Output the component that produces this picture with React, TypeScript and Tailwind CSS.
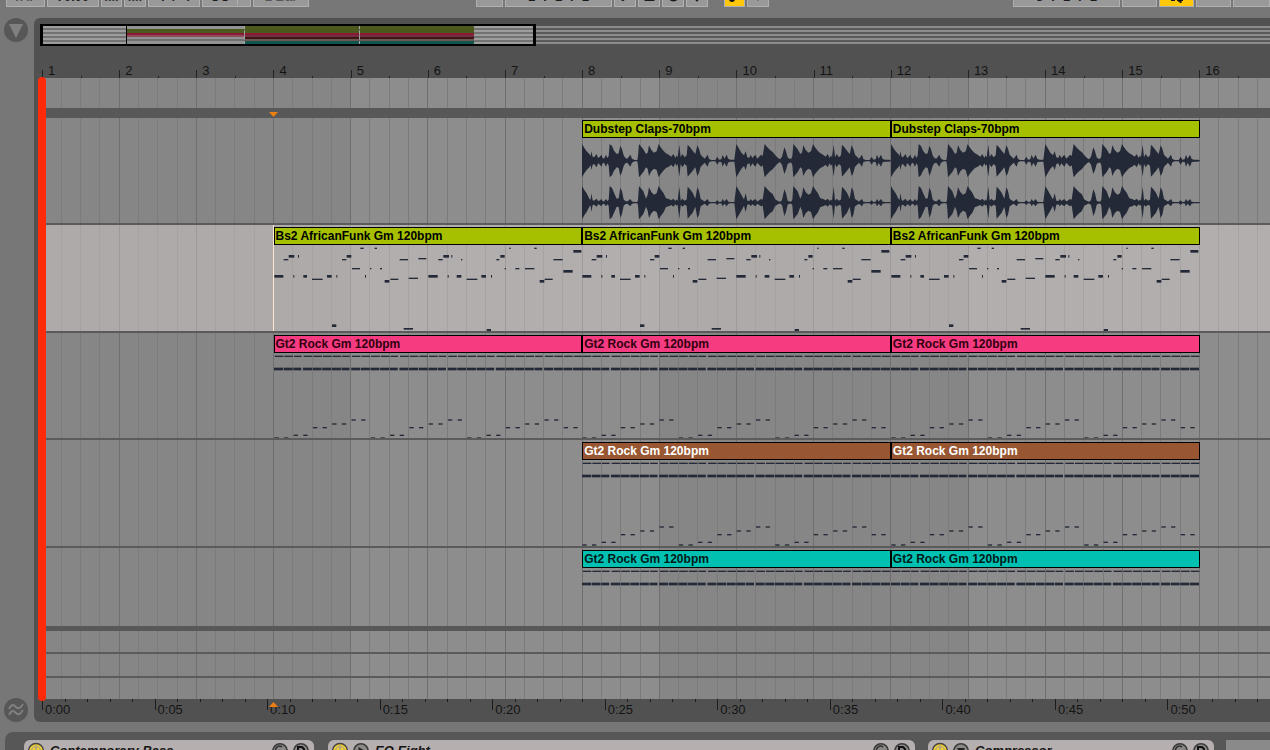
import type { ReactNode } from "react";
import { Play, Plus, Circle, Square } from "lucide-react";

const TOTAL_BARS = 15.913;
const TOTAL_SECONDS = 54.55;

const barPct = (bars: number) => `${(bars / TOTAL_BARS) * 100}%`;
const secPct = (secs: number) => `${(secs / TOTAL_SECONDS) * 100}%`;

type Note = [x: number, y: number, w: number, h: number];
type ClipKind = "audio" | "bass" | "rock";

type Track = {
    name: string;
    kind: ClipKind;
    start: number;
    count: number;
    header: string;
    lane: string;
    selected?: boolean;
};

const TRACKS: Track[] = [
    { name: "Dubstep Claps-70bpm", kind: "audio", start: 7, count: 2, header: "bg-[#a6c000] text-black", lane: "h-[107px] border-b-2" },
    { name: "Bs2 AfricanFunk Gm 120bpm", kind: "bass", start: 3, count: 3, header: "bg-[#a6c000] text-black", lane: "h-[108px] border-b-2", selected: true },
    { name: "Gt2 Rock Gm 120bpm", kind: "rock", start: 3, count: 3, header: "bg-[#f63b80] text-[#30000f]", lane: "h-[107px] border-b-2" },
    { name: "Gt2 Rock Gm 120bpm", kind: "rock", start: 7, count: 2, header: "bg-[#985732] text-white", lane: "h-[108px] border-b-2" },
    { name: "Gt2 Rock Gm 120bpm", kind: "rock", start: 7, count: 2, header: "bg-[#00c0b2] text-[#001a18]", lane: "h-[78px]" },
];

// note and waveform data share a 926 x 258 space per clip
const BASS_NOTES: Note[] = [
    [1, 90, 27, 8], [58, 90, 3, 8], [88, 90, 11, 8], [159, 90, 14, 8], [187, 90, 3, 8], [273, 90, 3, 8],
    [463, 90, 28, 8], [521, 90, 3, 8], [548, 90, 14, 8], [622, 90, 14, 8], [651, 90, 3, 8],
    [114, 101, 32, 4], [349, 101, 24, 4], [578, 101, 32, 4], [812, 101, 24, 4],
    [29, 42, 14, 4], [204, 42, 13, 4], [377, 42, 25, 4], [493, 42, 13, 4], [561, 42, 4, 4], [667, 42, 9, 4], [838, 42, 28, 4],
    [44, 30, 17, 8], [72, 30, 3, 8], [218, 30, 14, 8], [508, 30, 17, 8], [532, 30, 3, 8], [679, 30, 13, 8],
    [259, 8, 10, 4], [302, 8, 7, 4], [706, 8, 4, 4], [781, 8, 7, 4],
    [234, 69, 24, 4], [288, 69, 4, 4], [318, 69, 6, 4], [692, 69, 4, 4], [724, 69, 12, 4], [753, 69, 28, 4],
    [332, 105, 14, 8], [797, 105, 14, 8],
    [433, 39, 24, 4], [404, 98, 28, 4], [868, 75, 28, 8], [898, 15, 24, 8],
    [174, 238, 13, 8], [389, 249, 28, 5], [638, 252, 13, 6],
];

const STEP = 926 / 32;
const RIFF = [253, 253, 245, 245, 222, 222, 211, 211, 199, 199];

const ROCK_NOTES: Note[] = Array.from({ length: 32 }, (_, i) => i).flatMap((i): Note[] => {
    const x = i * STEP;
    const w = i % 5 === 2 ? 24 : 27;
    return [
        [x + 2, 8, w - 1, 4],
        [x, 44, w, 8],
        [x + 1, i >= 30 ? 222 : RIFF[i % 10], 13, 4],
    ];
});

const HITS_A = [
    [0, 50], [7, 38], [14, 28], [22, 20], [26, 14], [28, 28], [32, 12], [36, 10], [44, 20], [48, 8], [52, 10], [58, 18],
    [62, 8], [66, 6], [72, 18], [76, 8], [80, 14], [83, 50], [90, 44], [96, 30], [104, 20], [110, 22], [115, 45],
    [120, 34], [125, 16], [130, 8], [136, 6], [145, 18], [150, 6], [158, 2], [166, 2],
];
const HITS_B = [
    [463, 50], [470, 38], [478, 24], [486, 16], [491, 28], [496, 10], [502, 8], [506, 18], [511, 8], [520, 18], [526, 6],
    [537, 18], [542, 14], [548, 50], [556, 40], [564, 32], [572, 26], [580, 16], [588, 8], [594, 4], [600, 12],
    [607, 40], [612, 28], [617, 10], [622, 6], [628, 6],
];
const FILL = [
    [168, 14], [171, 50], [176, 44], [184, 34], [192, 20], [197, 24], [201, 46], [208, 32], [216, 24], [224, 28], [230, 50],
    [236, 40], [244, 30], [252, 22], [260, 18], [268, 12], [274, 20], [280, 8], [284, 16], [287, 10], [292, 48],
    [296, 10], [301, 20], [308, 10], [314, 16], [317, 48], [324, 40], [332, 30], [340, 20], [346, 46], [351, 36],
    [356, 18], [362, 12], [368, 6], [377, 18], [381, 5], [388, 2], [400, 2], [406, 12], [411, 3], [418, 4],
    [422, 18], [427, 6], [434, 18], [439, 5], [446, 3], [457, 3],
];
const ENVELOPE = [...HITS_A, ...FILL, ...HITS_B, ...FILL.map(([x, a]) => [x + 463, a])];

function wavePath(cy: number, quiet: number) {
    const amp = (a: number) => (a <= 22 ? Math.max(2, a * quiet) : a);
    const top = ENVELOPE.map(([x, a]) => `${x} ${cy - amp(a)}`);
    const bottom = ENVELOPE.map(([x, a]) => `${x} ${cy + amp(a)}`).reverse();
    return `M${top.join("L")}L926 ${cy - 2}L926 ${cy + 2}L${bottom.join("L")}Z`;
}

function ClipContent({ kind }: { kind: ClipKind }) {
    const notes = kind === "bass" ? BASS_NOTES : ROCK_NOTES;
    return (
        <svg viewBox="0 0 926 258" preserveAspectRatio="none" className="block w-full h-[86px] shrink-0 fill-[#232937]">
            {kind === "audio" ? (
                <>
                    <path d={wavePath(68, 1)} />
                    <path d={wavePath(194, 0.6)} />
                </>
            ) : (
                notes.map(([x, y, w, h], i) => <rect key={i} x={x} y={y} width={w} height={h} />)
            )}
        </svg>
    );
}

function Clip({ track }: { track: Track }) {
    return (
        <div className="flex flex-col shrink-0" style={{ width: barPct(4) }}>
            <div className={`h-[18px] shrink-0 border border-black px-px text-[12px] leading-[16px] font-bold whitespace-nowrap overflow-hidden ${track.header}`}>
                {track.name}
            </div>
            <ClipContent kind={track.kind} />
        </div>
    );
}

function Lane({ track }: { track: Track }) {
    return (
        <div className={`flex border-[#5b5b5b] pt-[2px] overflow-hidden ${track.lane} ${track.selected ? "bg-[#fef3ef]/33" : ""}`}>
            <div
                className={`shrink-0 ${track.selected ? "-mt-[2px] border-r border-[#ffe6cc]" : ""}`}
                style={{ width: barPct(track.start) }}
            />
            {Array.from({ length: track.count }, (_, i) => (
                <Clip key={i} track={track} />
            ))}
        </div>
    );
}

function GridLines() {
    return (
        <svg className="absolute inset-0 w-full h-full" shapeRendering="crispEdges">
            {[0, 4, 8, 12].map((bar) => (
                <rect key={bar} x={barPct(bar)} y="0" width={barPct(4)} height="100%" fill={bar % 8 === 0 ? "#868686" : "#8d8d8d"} />
            ))}
            {Array.from({ length: 64 }, (_, i) => (
                <line
                    key={i}
                    x1={barPct(i / 4)}
                    x2={barPct(i / 4)}
                    y1="0"
                    y2="100%"
                    stroke={i % 4 === 0 ? "#6f6f6f" : "#7b7b7b"}
                />
            ))}
        </svg>
    );
}

function BarRuler() {
    return (
        <div className="flex h-[16px] mt-[16px]">
            {Array.from({ length: 16 }, (_, i) => (
                <div key={i} className="flex shrink-0" style={{ width: barPct(1) }}>
                    <div className="w-1/2 flex items-end">
                        <span className="w-px h-[8px] bg-[#222]" />
                        <span className="pl-[5px] text-[13px] leading-[14px] text-[#141414]">{i + 1}</span>
                    </div>
                    <div className="flex items-end">
                        <span className="w-px h-[2px] bg-[#222]" />
                    </div>
                </div>
            ))}
        </div>
    );
}

function TimeRuler() {
    return (
        <div className="relative flex h-[23px] overflow-hidden">
            {Array.from({ length: 11 }, (_, i) => (
                <div key={i} className="relative flex shrink-0" style={{ width: secPct(5) }}>
                    <div className="absolute inset-0 flex">
                        {[0, 1, 2, 3, 4].map((s) => (
                            <div key={s} className="w-1/5">
                                <div className={`w-px bg-[#1c1c1c] ${s === 0 ? "h-[11px]" : "h-[3px]"}`} />
                            </div>
                        ))}
                    </div>
                    <span className="pl-[3px] pt-[3px] text-[13px] leading-[16px] text-[#141414]">
                        0:{String(i * 5).padStart(2, "0")}
                    </span>
                </div>
            ))}
            <svg viewBox="0 0 9 5" className="absolute top-[3px] -ml-[5px] w-[9px] h-[5px] fill-[#ee8010]" style={{ left: barPct(3) }}>
                <path d="M4.5 0L9 5H0Z" />
            </svg>
        </div>
    );
}

const OVERVIEW_ROWS = [
    { gap: "h-[3px]", a: "bg-[#929292]", b: "bg-[#4b5a1c]" },
    { gap: "h-[4px]", a: "bg-[#4b5a1c]", b: "bg-[#4b5a1c]" },
    { gap: "h-[2px]", a: "bg-[#8e1838]", b: "bg-[#8e1838]" },
    { gap: "h-[2px]", a: "bg-[#8b4c5c]", b: "bg-[#713042]" },
    { gap: "h-[2px]", a: "bg-[#929292]", b: "bg-[#3f1515]" },
    { gap: "h-[2px]", a: "bg-[#6f6f6f]", b: "bg-[#6c5850]" },
    { gap: "h-[3px]", a: "bg-[#929292]", b: "bg-[#10564f]" },
];

function Overview() {
    return (
        <div className="relative -ml-[2px] mt-[6px] h-[22px] py-[2px]">
            <div className="h-[18px] bg-[repeating-linear-gradient(to_bottom,#8c8c8c_0px,#8c8c8c_2px,#5a5a5a_2px,#5a5a5a_4px)]" />
            <div className="absolute inset-y-0 left-0 w-[40.3%] border-2 border-x-3 border-black flex">
                <div className="w-[17.2%] border-r border-black bg-white/15" />
                <div className="w-[23.8%]">
                    {OVERVIEW_ROWS.map((row, i) => <div key={i} className={`${row.gap} ${row.a}`} />)}
                </div>
                <div className="w-[23.5%] border-l border-dashed border-[#a5a5a5]">
                    {OVERVIEW_ROWS.map((row, i) => <div key={i} className={`${row.gap} ${row.b}`} />)}
                </div>
                <div className="w-[23.5%] border-l border-dashed border-[#a5a5a5]">
                    {OVERVIEW_ROWS.map((row, i) => <div key={i} className={`${row.gap} ${row.b}`} />)}
                </div>
                <div className="flex-1 bg-white/15" />
            </div>
        </div>
    );
}

function ToolButton({ label, width, tone = "bg-[#999]", children }: { label: string; width: string; tone?: string; children?: ReactNode }) {
    return (
        <button
            aria-label={label}
            className={`h-[22px] shrink-0 flex items-end justify-center border border-[#b0b0b0] pb-px text-[13px] leading-[16px] font-bold text-[#1a1a1a] whitespace-nowrap ${tone} ${width}`}
        >
            {children}
        </button>
    );
}

function PositionFields({ values }: { values: string[] }) {
    return (
        <span className="flex gap-[8px]">
            {values.map((v, i) => (
                <span key={i} className="flex gap-[8px]">
                    {i > 0 && <span>.</span>}
                    <span>{v}</span>
                </span>
            ))}
        </span>
    );
}

function Toolbar() {
    return (
        <div className="h-[18px] overflow-hidden">
            <div className="-mt-[15px] flex">
                <div className="w-[476px] shrink-0 flex gap-[2px] pl-[6px]">
                    <ToolButton label="Tap tempo" width="w-[39px]"><span className="text-[#555]">TAP</span></ToolButton>
                    <ToolButton label="Tempo" width="w-[52px]">70.00</ToolButton>
                    <ToolButton label="Nudge down" width="w-[21px]">
                        <span className="text-[#333]">llll</span>
                    </ToolButton>
                    <ToolButton label="Nudge up" width="w-[22px]">
                        <span className="text-[#333]">llll</span>
                    </ToolButton>
                    <ToolButton label="Time signature" width="w-[52px]">4&nbsp;&nbsp;/&nbsp;&nbsp;4</ToolButton>
                    <ToolButton label="Metronome" width="w-[49px]">
                        <span className="flex-1 text-center border-r border-[#b0b0b0]">OO</span>
                        <span className="w-[12px]" />
                    </ToolButton>
                    <ToolButton label="Quantization" width="w-[56px]"><span className="text-[#555]">1 Bar</span></ToolButton>
                </div>
                <div className="flex-1 flex gap-[2px]">
                    <ToolButton label="Follow" width="w-[27px]" />
                    <ToolButton label="Position" width="w-[107px]"><PositionFields values={["1", "1", "1"]} /></ToolButton>
                    <ToolButton label="Play" width="w-[22px]"><Play size={13} fill="#111" className="mb-[3px]" /></ToolButton>
                    <ToolButton label="Stop" width="w-[22px]"><Square size={13} fill="#111" className="mb-[3px]" /></ToolButton>
                    <ToolButton label="Record" width="w-[22px]"><Circle size={13} fill="#111" className="mb-[3px]" /></ToolButton>
                    <ToolButton label="Overdub" width="w-[22px]"><Plus size={14} strokeWidth={5} className="mb-[2px]" /></ToolButton>
                    <div className="w-[12px]" />
                    <ToolButton label="Automation arm" width="w-[21px]" tone="bg-[#ffc80a]">
                        <svg viewBox="0 0 14 14" className="w-[14px] h-[14px] mb-[2px]" fill="none" stroke="#111" strokeWidth="2">
                            <circle cx="4" cy="10" r="2" fill="#111" />
                            <path d="M6 9L12 2" />
                        </svg>
                    </ToolButton>
                    <ToolButton label="Re-enable automation" width="w-[22px]">
                        <Plus size={12} className="mb-[2px] text-[#555]" />
                    </ToolButton>
                </div>
                <div className="flex gap-[2px]">
                    <ToolButton label="Loop start" width="w-[107px]"><PositionFields values={["3", "1", "1"]} /></ToolButton>
                    <ToolButton label="Punch in" width="w-[35px]" />
                    <ToolButton label="Loop" width="w-[35px]" tone="bg-[#ffc80a]">
                        <svg viewBox="0 0 16 14" className="w-[16px] h-[14px] mb-[2px]" fill="none" stroke="#111" strokeWidth="2">
                            <path d="M6 11H3V3H13V11H9" />
                            <path d="M12 7L8 11L12 14Z" fill="#111" strokeWidth="1" />
                        </svg>
                    </ToolButton>
                    <ToolButton label="Punch out" width="w-[35px]" />
                    <ToolButton label="Loop length" width="w-[37px]" />
                </div>
            </div>
        </div>
    );
}

function PowerIcon() {
    return (
        <svg viewBox="0 0 18 18" className="w-[18px] h-[18px] shrink-0" fill="none">
            <circle cx="9" cy="9" r="7.5" fill="#f3d32b" stroke="#444" strokeWidth="1.5" />
            <circle cx="9" cy="9" r="4.5" stroke="#b8ad78" strokeWidth="1.5" />
            <path d="M9 3V9" stroke="#b8ad78" strokeWidth="2" />
        </svg>
    );
}

function DiscIcon({ children }: { children: ReactNode }) {
    return (
        <svg viewBox="0 0 18 18" className="w-[18px] h-[18px] shrink-0" fill="none">
            <circle cx="9" cy="9" r="7.2" fill="#8b8887" stroke="#3c3c3c" strokeWidth="1.6" />
            {children}
        </svg>
    );
}

function Device({ name, width, icon }: { name: string; width: string; icon?: ReactNode }) {
    return (
        <div className={`h-[30px] shrink-0 flex items-start gap-[3px] rounded-t-[6px] bg-[#b5b0af] pl-[3px] pr-[4px] pt-[2px] ${width}`}>
            <button aria-label={`${name} on`}><PowerIcon /></button>
            {icon && <button aria-label={`${name} view`}>{icon}</button>}
            <span className="flex-1 pl-[2px] pt-px text-[13px] leading-[16px] font-bold italic text-[#141414] whitespace-nowrap">{name}</span>
            <button aria-label={`Swap ${name}`}>
                <DiscIcon>
                    <path d="M5 10A4 4 0 0 1 11 5M13 8A4 4 0 0 1 7 13" stroke="#333" strokeWidth="1.6" />
                </DiscIcon>
            </button>
            <button aria-label={`Save ${name}`}>
                <DiscIcon>
                    <path d="M6 14V5H10L12 7V14M6 9H12" stroke="#111" strokeWidth="2" />
                </DiscIcon>
            </button>
        </div>
    );
}

export default function App() {
    return (
        <div className="h-screen flex flex-col overflow-hidden bg-[#777] font-['Liberation_Sans',Arial,sans-serif]">
            <Toolbar />

            <div className="flex shrink-0">
                <div className="w-[34px] shrink-0 flex flex-col justify-between pl-[4px]">
                    <button aria-label="Hide overview" className="w-[24px] h-[24px]">
                        <svg viewBox="0 0 24 24" className="w-[24px] h-[24px]">
                            <circle cx="12" cy="12" r="12" fill="#575757" />
                            <path d="M5 6H19L12 20Z" fill="#808080" />
                        </svg>
                    </button>
                    <button aria-label="Show automation" className="w-[24px] h-[24px]">
                        <svg viewBox="0 0 24 24" className="w-[24px] h-[24px]" fill="none" stroke="#808080" strokeWidth="1.8">
                            <circle cx="12" cy="12" r="12" fill="#575757" stroke="none" />
                            <path d="M5 11C8 5 10 7 12 9S16 11 19 6" />
                            <path d="M5 17C8 11 10 13 12 15S16 17 19 12" />
                        </svg>
                    </button>
                </div>

                <main className="flex-1 min-w-0 rounded-l-[6px] bg-[#515151] pl-[8px]">
                    <Overview />
                    <BarRuler />

                    <div className="relative">
                        <GridLines />
                        <div className="relative">
                            <div className="h-[30px]" />
                            <div className="relative h-[10px] bg-[#585858]">
                                <svg viewBox="0 0 9 5" className="absolute bottom-px -ml-[5px] w-[9px] h-[5px] fill-[#ee8010]" style={{ left: barPct(3) }}>
                                    <path d="M0 0H9L4.500 5Z" />
                                </svg>
                            </div>
                            {TRACKS.map((track, i) => (
                                <Lane key={i} track={track} />
                            ))}
                            <div className="h-[5px] bg-[#585858]" />
                            <div className="h-[23px] border-b-2 border-[#5b5b5b]" />
                            <div className="h-[24px] border-b-2 border-[#5b5b5b]" />
                            <div className="h-[21px]" />
                        </div>
                        <div className="absolute -top-px -bottom-[2px] -left-[4px] z-10 w-[8px] rounded-[4px] bg-[#ff2a08]" />
                    </div>

                    <TimeRuler />
                </main>
            </div>

            <div className="mt-[10px] ml-[5px] flex-1 flex items-start rounded-tl-[8px] bg-[#575757] pt-[8px] pl-[19px] overflow-hidden">
                <Device name="Contemporary Bass" width="w-[290px]" />
                <div className="w-[14px] shrink-0" />
                <Device
                    name="EQ Eight"
                    width="w-[587px]"
                    icon={<DiscIcon><path d="M6.500 5L13 9L6.500 13Z" fill="#222" /></DiscIcon>}
                />
                <div className="w-[13px] shrink-0" />
                <Device
                    name="Compressor"
                    width="w-[286px]"
                    icon={<DiscIcon><path d="M5 6H13L9 13Z" fill="#222" /></DiscIcon>}
                />
                <div className="w-[12px] shrink-0" />
                <div className="h-[30px] flex-1 bg-[#8a8a8a]" />
            </div>
        </div>
    );
}
